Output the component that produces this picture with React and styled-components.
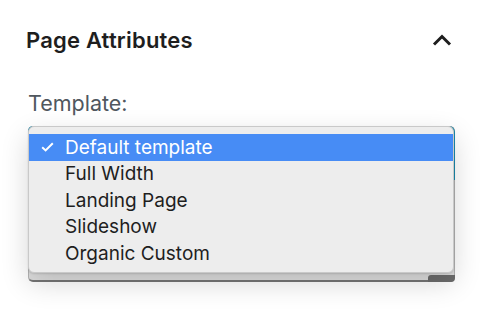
import React from "react";
import styled, { createGlobalStyle } from "styled-components";

const GlobalStyle = createGlobalStyle`
  html, body {
    margin: 0;
    padding: 0;
    background: #ffffff;
  }
  body {
    font-family: Inter, "Noto Sans", "Liberation Sans", sans-serif;
    -webkit-font-smoothing: antialiased;
  }
`;

const Panel = styled.div`
  width: 480px;
  height: 314px;
  box-sizing: border-box;
  padding: 22px 28px 0 26px;
  overflow: hidden;
`;

const Header = styled.div`
  display: flex;
  align-items: center;
  justify-content: space-between;
  height: 36px;
`;

const Title = styled.h2`
  margin: 0;
  font-size: 22px;
  font-weight: 600;
  color: #1e1e1e;
  letter-spacing: 0.2px;
`;

const Toggle = styled.button`
  display: flex;
  align-items: center;
  justify-content: center;
  padding: 0;
  border: none;
  background: none;
  color: #1e1e1e;
  cursor: pointer;
`;

const Label = styled.div`
  margin: 33px 0 0 2px;
  font-size: 21.5px;
  line-height: 24px;
  color: #50575e;
`;

const SelectWrap = styled.div`
  position: relative;
  margin: 11px 0 0 2px;
  width: 427px;
  height: 156px;
  box-sizing: border-box;
  border-radius: 5px;
  background: #dedede;
  border: 1px solid #b4b4b4;
  border-bottom: 2px solid #767676;

  &::before {
    content: "";
    position: absolute;
    left: -1px;
    right: -1px;
    top: -1px;
    height: 54px;
    border-left: 2px solid #1a8cb0;
    border-right: 2px solid #1a8cb0;
    border-radius: 5px 6px 0 0;
  }

  &::after {
    content: "";
    position: absolute;
    right: -1px;
    bottom: -2px;
    width: 27px;
    height: 7px;
    background: #6c6c6c;
    border-radius: 3px 0 4px 0;
  }
`;

const Menu = styled.ul`
  position: absolute;
  z-index: 2;
  left: -1px;
  top: -1px;
  width: 426px;
  height: 147px;
  box-sizing: border-box;
  margin: 0;
  padding: 7px 0 0;
  list-style: none;
  background: #ededed;
  border: 1px solid #c9c9c9;
  border-radius: 6px;
  box-shadow: 0 10px 28px rgba(0, 0, 0, 0.16), 0 1px 2px rgba(0, 0, 0, 0.12);
`;

const Option = styled.li`
  position: relative;
  display: flex;
  align-items: center;
  height: 26.5px;
  padding-left: 36px;
  font-size: 19px;
  color: ${(p) => (p.selected ? "#ffffff" : "#1e1e1e")};
  background: ${(p) => (p.selected ? "#478cf5" : "transparent")};
`;

const Check = styled.svg`
  position: absolute;
  left: 12px;
  top: 8px;
`;

const templates = [
  "Default template",
  "Full Width",
  "Landing Page",
  "Slideshow",
  "Organic Custom",
];

export default function App() {
  const current = "Default template";
  return (
    <>
      <GlobalStyle />
      <Panel>
        <Header>
          <Title>Page Attributes</Title>
          <Toggle aria-label="Collapse">
            <svg width="20" height="12" viewBox="0 0 20 12" fill="none">
              <path
                d="M2 10.5 L10 2.5 L18 10.5"
                stroke="currentColor"
                strokeWidth="3"
              />
            </svg>
          </Toggle>
        </Header>
        <Label>Template:</Label>
        <SelectWrap>
          <Menu role="listbox">
            {templates.map((t) => (
              <Option key={t} selected={t === current}>
                {t === current && (
                  <Check width="13" height="10" viewBox="0 0 13 10" fill="none">
                    <path
                      d="M1.2 5.2 L4.6 8.4 L11.8 1.2"
                      stroke="#ffffff"
                      strokeWidth="2"
                    />
                  </Check>
                )}
                {t}
              </Option>
            ))}
          </Menu>
        </SelectWrap>
      </Panel>
    </>
  );
}
